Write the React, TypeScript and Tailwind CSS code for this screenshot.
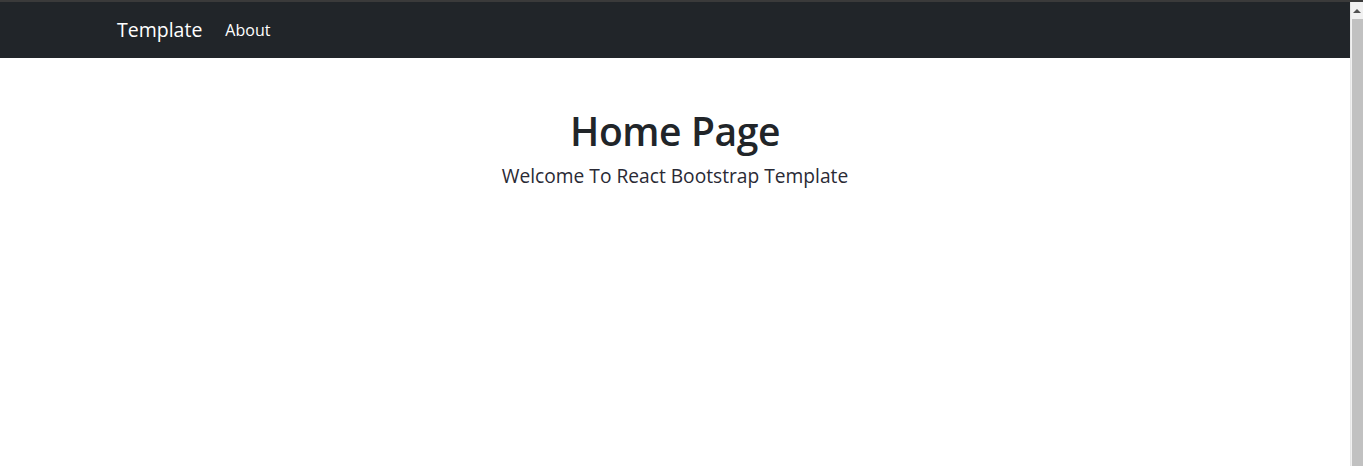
import React from "react";

const NAV_LINKS = [{ name: "About", href: "#about" }];

const ScrollBar = () => (
  <div className="w-[13px] flex flex-col bg-[#f1f1f1] border-l border-[#e6e6e6]">
    <div className="h-[17px] flex items-center justify-center">
      <div className="w-0 h-0 border-l-[4px] border-r-[4px] border-b-[4px] border-l-transparent border-r-transparent border-b-[#505050]" />
    </div>
    <div className="flex-1 ml-[1px] bg-[#c1c1c1]" />
  </div>
);

export default function App() {
  return (
    <div className="h-[466px] flex flex-col overflow-hidden bg-white font-['Open_Sans',sans-serif]">
      <div className="h-[2px] bg-[#3a3a3a]" />
      <div className="flex flex-1">
        <div className="flex-1 flex flex-col">
          {/* navbar */}
          <nav className="h-[56px] bg-[#212529] flex items-center">
            <div className="w-full max-w-[1140px] mx-auto px-3 flex items-center">
              <a href="#" className="text-white text-[19.5px] leading-[30px] mr-4">
                Template
              </a>
              {NAV_LINKS.map((item) => (
                <a key={item.name} href={item.href} className="text-white text-[16px] font-medium pl-[7px] pr-2">
                  {item.name}
                </a>
              ))}
            </div>
          </nav>

          <main className="text-center text-[#212529] pt-[49px]">
            <h1 className="text-[39px] font-semibold leading-[47px] mb-2 tracking-[-0.4px]">Home Page</h1>
            <p className="text-[19.2px] font-normal text-[#2a2a35]">Welcome To React Bootstrap Template</p>
          </main>
        </div>
        <ScrollBar />
      </div>
    </div>
  );
}
